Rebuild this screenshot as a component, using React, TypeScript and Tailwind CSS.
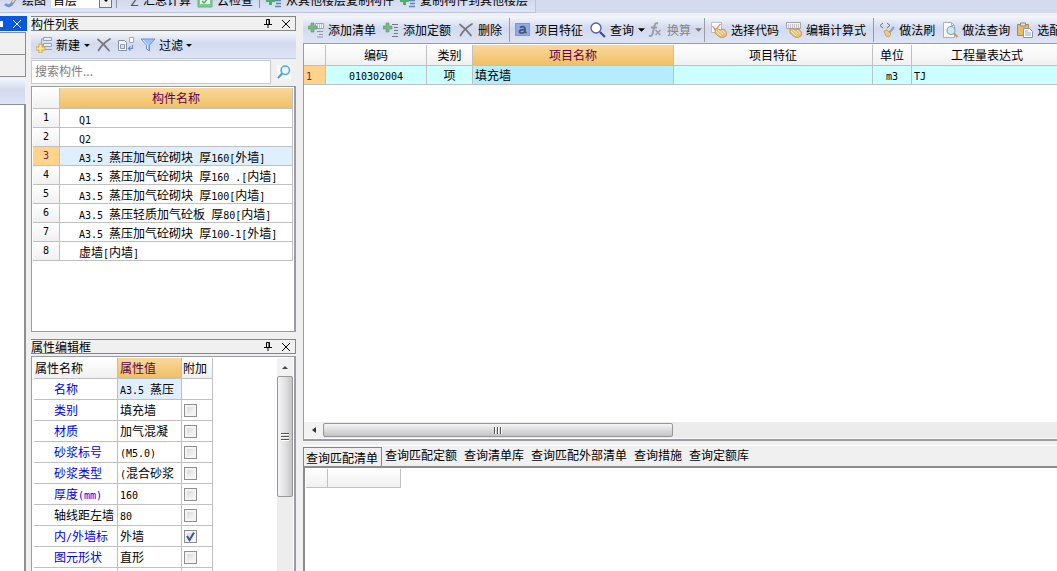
import type { ReactNode } from 'react';
import clsx from 'clsx';

const BAR = 'bg-linear-to-b from-[#f3f6fc] from-0% via-[#d3daee] via-45% to-[#dde4f6]';
const HEAD = 'bg-linear-to-b from-white to-[#f0f0f0]';
const HEAD_ACTIVE = 'bg-linear-to-b from-[#fad79b] to-[#f0c063] text-[#5a0050]';

const components = [
  'Q1',
  'Q2',
  'A3.5 蒸压加气砼砌块 厚160[外墙]',
  'A3.5 蒸压加气砼砌块 厚160 .[内墙]',
  'A3.5 蒸压加气砼砌块 厚100[内墙]',
  'A3.5 蒸压轻质加气砼板 厚80[内墙]',
  'A3.5 蒸压加气砼砌块 厚100-1[外墙]',
  '虚墙[内墙]',
];

type Property = { name: string; value: string; own?: boolean; check?: boolean };

const properties: Property[] = [
  { name: '名称', value: 'A3.5 蒸压' },
  { name: '类别', value: '填充墙', check: false },
  { name: '材质', value: '加气混凝', check: false },
  { name: '砂浆标号', value: '(M5.0)', check: false },
  { name: '砂浆类型', value: '(混合砂浆', check: false },
  { name: '厚度(mm)', value: '160', check: false },
  { name: '轴线距左墙', value: '80', own: true, check: false },
  { name: '内/外墙标', value: '外墙', check: true },
  { name: '图元形状', value: '直形', check: false },
  { name: '起点顶标高', value: '', own: true, check: false },
];

const tabs = ['查询匹配清单', '查询匹配定额', '查询清单库', '查询匹配外部清单', '查询措施', '查询定额库'];

// Latin runs are half the width of a Chinese character
function Mixed({ text }: { text: string }) {
  return (
    <>
      {text.split(/([\x20-\x7e]+)/).map((part, i) =>
        /^[\x20-\x7e]+$/.test(part) ? (
          <span key={i} className="font-['DejaVu_Sans_Mono',monospace] text-[10px] leading-none whitespace-pre">
            {part}
          </span>
        ) : (
          part
        ),
      )}
    </>
  );
}

function Svg({ children, className }: { children: ReactNode; className?: string }) {
  return (
    <svg viewBox="0 0 16 16" className={clsx('size-4 shrink-0', className)} fill="none" aria-hidden="true">
      {children}
    </svg>
  );
}

const GreenPlus = () => <path d="M3 1h3v3h3v3H6v3H3V7H0V4h3z" fill="#79b68b" stroke="#589a6b" strokeWidth=".6" />;

const AddListIcon = () => (
  <Svg>
    <path d="M7.500 1.500h8v5h-8z" fill="#f3f6fa" stroke="#9ba7b5" />
    <path d="M9 3h1m1 0h1m1 0h1M9 5h1m1 0h1m1 0h1" stroke="#8290a2" />
    <path d="M9 9.500h6M11 12.500h4M9 15h6" stroke="#8d98a6" />
    <GreenPlus />
  </Svg>
);

const AddQuotaIcon = () => (
  <Svg>
    <path d="M9 2.500h6M11 5.500h4M11 8.500h4M11 11.500h4M9 14.500h6" stroke="#74797f" />
    <GreenPlus />
  </Svg>
);

const DeleteIcon = () => (
  <Svg>
    <path d="M2 2.500c4 3 8 7 11 11M14 2C9 5 5 9 2.500 13.500" stroke="#777" strokeWidth="1.700" strokeLinecap="round" />
  </Svg>
);

const FeatureIcon = () => (
  <Svg>
    <path d="M0 1h15v13H0z" fill="#7598df" />
    <path d="M1 2h13v11H1z" fill="#8daceb" />
    <path d="M5 5.500c2-1.500 5-1 5 1v4.500M10 7.500c-3 0-5.500.5-5.500 2.200 0 2 4 1.800 5.500-.2M10 10l1.500 1" stroke="#49566f" strokeWidth="1.900" />
  </Svg>
);

const QueryIcon = () => (
  <Svg>
    <circle cx="6" cy="6" r="5" fill="#fff" stroke="#5858b0" strokeWidth="1.300" />
    <path d="m10 10 5 5" stroke="#4646a0" strokeWidth="2.200" />
  </Svg>
);

const FxIcon = () => (
  <Svg>
    <path d="M11 1.500C8.500.5 8 2 7.500 4L5.500 12c-.5 2-2 2.500-3.500 1.500M4 5.500h6" stroke="#999ca5" strokeWidth="1.900" />
    <path d="m8.500 8 5 5m0-5-5 5" stroke="#999ca5" strokeWidth="1.500" />
  </Svg>
);

const HandIcon = ({ chart }: { chart?: boolean }) => (
  <Svg>
    {chart ? (
      <>
        <path d="M.5.5h10v10H.500z" fill="#fff" stroke="#b9bec8" />
        <path d="m1.500 4 3 4 5-6" stroke="#dc8d85" strokeWidth="1.300" />
      </>
    ) : (
      <>
        <path d="M.5.5h14v6H.500z" fill="#f3f3f3" stroke="#a3a6ad" />
        <path d="M2 3h11M2 5h11" stroke="#8f939c" strokeDasharray="1 1" />
      </>
    )}
    <path d="M4 7c2-1 4 0 5 1l4-1 3 4-1 3-4 2c-3-1-5-3-7-5z" fill="#e5c27d" stroke="#b98f48" strokeWidth=".8" />
    <path d="m7 8 5 4m-7-3 5 5m1-6 3 3" stroke="#fbe8b8" />
  </Svg>
);

const BrushIcon = () => (
  <Svg>
    <path d="M4 1 1 3.500 4 6M8 1l3 2.500L8 6" stroke="#6f7480" />
    <path d="m15 5-5 6" stroke="#9a9eaa" strokeWidth="2" />
    <path d="m5 9 3-1 4 4-2 3-3-1z" fill="#f1cb79" stroke="#c79848" strokeWidth=".8" />
  </Svg>
);

const DocSearchIcon = () => (
  <Svg>
    <path d="M1.500.5h8l3 3v12h-11z" fill="#fdfeff" stroke="#a8b2c0" />
    <path d="M9.500.5v3h3" stroke="#a8b2c0" />
    <circle cx="9" cy="8.500" r="4" fill="#cde8f5" stroke="#82a9bf" strokeWidth="1.200" />
    <path d="m12 11.500 3.500 3.500" stroke="#d09850" strokeWidth="2" />
  </Svg>
);

const PasteIcon = () => (
  <Svg>
    <path d="M.5 2.500h11v11H.500z" fill="#eabb66" stroke="#b48643" />
    <path d="M3.500 1h5v3h-5z" fill="#dfe2e7" stroke="#858b94" />
    <path d="M6.500 6.500h6l3 3v6h-9z" fill="#fff" stroke="#8796ad" />
    <path d="M8 9h3m-3 2h6m-6 2h6" stroke="#8fa8cb" />
  </Svg>
);

const NewIcon = () => (
  <Svg>
    <path d="M7.500.5h8v3h-8zM7.500 6.500h8v3h-8zM5 2h2M5 8h2M5.500 2v8M9 12.500h7" fill="#e6edf5" stroke="#91a5ba" />
    <path d="M3 7h3v3h3v3H6v3H3v-3H0v-3h3z" fill="#fbe48a" stroke="#c89c36" strokeWidth=".8" />
  </Svg>
);

const CopyIcon = () => (
  <Svg>
    <path d="M.5 3.500h6l2 2v8h-8z" fill="#fff" stroke="#8390a8" />
    <path d="M2.500 7.500h4v4h-4z" fill="#d7dce5" stroke="#8f99aa" />
    <path d="M11.500.5h4v5h-4z" fill="#fff" stroke="#9daac0" />
    <path d="M14.500 8v3.500H11M12.500 9.500l-2 2 2 2" stroke="#668ed5" strokeWidth="1.200" />
  </Svg>
);

const FilterIcon = () => (
  <Svg>
    <path d="M1 2h14L9.500 8v6L6.500 12V8z" fill="#9fc1ef" stroke="#6793d6" />
    <path d="m3 3 4.500 5v4" stroke="#dceafc" />
  </Svg>
);

const GridPlusIcon = () => (
  <Svg>
    <path d="M3 4h3v3h3v3H6v3H3v-3H0V7h3z" fill="#4cae68" />
    <path d="M9 8.500h6M10 11.500h5M9 14.500h6" stroke="#5b86b5" strokeWidth="1.500" />
  </Svg>
);

const CloudIcon = () => (
  <Svg>
    <path d="M1 3h14v12H1z" fill="#7fca93" stroke="#62b47a" />
    <path d="M3 7h10v5H3z" fill="#e9f8ed" />
    <path d="m5 9 2 2 4-5" stroke="#4daa67" strokeWidth="1.500" />
  </Svg>
);

const DrawIcon = () => (
  <Svg>
    <path d="M1 12c3 3 6 2 8-2l5-7" stroke="#7097ce" strokeWidth="3" />
    <path d="m7 10 6-8 2 2-6 7z" fill="#eed69f" stroke="#a6a1a0" strokeWidth=".8" />
  </Svg>
);

const Caret = ({ muted }: { muted?: boolean }) => (
  <svg viewBox="0 0 8 4" className={clsx('h-1 w-[7px]', muted ? 'fill-[#777]' : 'fill-black')} aria-hidden="true">
    <path d="M0 0h8L4 4z" />
  </svg>
);

const SmallCaret = () => (
  <svg viewBox="0 0 6 3" className="h-[3px] w-1.5" aria-hidden="true">
    <path d="M0 0h6L3 3z" />
  </svg>
);

const Sep = () => <span className="h-6 w-px shrink-0 bg-[#9a9ca4]" />;

function Tool({ icon, label, drop, muted }: { icon: ReactNode; label: string; drop?: boolean; muted?: boolean }) {
  return (
    <button
      type="button"
      disabled={muted}
      className={clsx('flex shrink-0 items-center gap-1 whitespace-nowrap', drop ? 'pr-0.5' : 'pr-[7px]', muted && 'text-[#858585]')}
    >
      {icon}
      {label}
      {drop && <Caret muted={muted} />}
    </button>
  );
}

const CloseGlyph = () => (
  <svg viewBox="0 0 8 8" className="size-2" stroke="currentColor" aria-hidden="true">
    <path d="m0 0 8 8M8 0 0 8" />
  </svg>
);

const PinGlyph = () => (
  <svg viewBox="0 0 8 9" className="h-[9px] w-2" fill="none" stroke="currentColor" aria-hidden="true">
    <path d="M2.500 5V.5h3V5M5 .5V5M0 5.500h8M4 6v3" />
  </svg>
);

function PanelTitle({ title }: { title: string }) {
  return (
    <div className="flex h-[15px] shrink-0 items-center border border-l-0 border-[#858585] pr-[5px] leading-[13px]">
      <h2 className="flex-1">{title}</h2>
      <button type="button" aria-label="固定" className="mr-[10px]">
        <PinGlyph />
      </button>
      <button type="button" aria-label="关闭">
        <CloseGlyph />
      </button>
    </div>
  );
}

function TopBar() {
  return (
    <header className="flex h-[13px] shrink-0 bg-[#d5dbee]">
      <div className="flex h-[13px] w-[536px] shrink-0 items-end overflow-hidden border-r border-b border-[#bcc4da] bg-linear-to-b from-[#d2d9ed] to-[#dfe5f7] pb-1 pl-1 leading-4">
        <DrawIcon />
        <span className="ml-0.5 w-[29px]">绘图</span>
        <div className="flex w-[61px] items-end bg-white">
          <select aria-label="楼层" className="w-12 appearance-none pl-0.5">
            <option>首层</option>
          </select>
          <span className="flex h-4 w-[13px] items-end justify-center border border-[#777] bg-[#eee] pb-[5px]">
            <SmallCaret />
          </span>
        </div>
        <span className="ml-1 h-4 w-px bg-[#8e929e]" />
        <button type="button" className="ml-[9px] flex whitespace-nowrap">
          <span className="w-[17px] text-sm leading-4 text-[#555]">Σ</span>汇总计算
        </button>
        <button type="button" className="ml-1.5 flex gap-1 whitespace-nowrap">
          <CloudIcon />
          云检查
        </button>
        <span className="mx-1.5 h-4 w-px bg-[#8e929e]" />
        <button type="button" className="flex gap-1 whitespace-nowrap">
          <GridPlusIcon />
          从其他楼层复制构件
        </button>
        <button type="button" className="ml-1.5 flex gap-1 whitespace-nowrap">
          <GridPlusIcon />
          复制构件到其他楼层
        </button>
      </div>
    </header>
  );
}

function LeftDock() {
  return (
    <aside className="flex w-[27px] shrink-0 flex-col">
      <div className="flex h-[15px] shrink-0 items-center justify-end bg-[#0a58e0] pr-1.5 text-white">
        <span className="mr-2.5 h-1.5 w-1 bg-white" />
        <button type="button" aria-label="关闭">
          <CloseGlyph />
        </button>
      </div>
      <div className="mt-px mr-px h-[23px] shrink-0 border border-l-0 border-[#8c8c8c]" />
      <div className="mr-px h-[22px] shrink-0 border-r border-b border-[#8c8c8c]" />
      <div className={clsx('mt-px mr-0.5 h-[26px] shrink-0', BAR)} />
      <div className="mr-px flex-1 border-t border-r-2 border-[#8e9099] bg-white" />
    </aside>
  );
}

function ComponentList() {
  return (
    <section className="flex min-h-0 flex-1 flex-col">
      <PanelTitle title="构件列表" />
      <div className={clsx('mt-px flex h-[27px] shrink-0 items-center border-b border-[#c5cadb] pl-[5px]', BAR)}>
        <button type="button" className="flex items-center gap-1">
          <NewIcon />
          新建
          <SmallCaret />
        </button>
        <button type="button" aria-label="删除" className="ml-1.5">
          <DeleteIcon />
        </button>
        <button type="button" aria-label="复制" className="ml-1.5">
          <CopyIcon />
        </button>
        <button type="button" className="ml-1.5 flex items-center gap-[3px]">
          <FilterIcon />
          过滤
          <SmallCaret />
        </button>
      </div>
      <div className="mt-px flex h-6 shrink-0 items-center">
        <input
          type="text"
          aria-label="搜索构件"
          placeholder="搜索构件..."
          className="h-6 min-w-0 flex-1 border border-[#c7c9cf] bg-white px-[3px] pb-1 outline-none placeholder:text-[#7d7d7d]"
        />
        <button type="button" aria-label="搜索" className="mr-[5px] ml-1.5 bg-[#fafafa]">
          <Svg className="size-[14px]">
            <circle cx="9.500" cy="6" r="4.800" fill="#eaf6fe" stroke="#55a8df" strokeWidth="1.800" />
            <path d="M6 9.500 1 15" stroke="#4b9ede" strokeWidth="2.400" />
          </Svg>
        </button>
      </div>
      <div className="mt-0.5 min-h-0 flex-1 overflow-hidden border border-r-2 border-[#9a9ca4] bg-white pt-px pr-px pl-px">
        <table className="w-full table-fixed border-separate border-spacing-0 leading-4">
          <colgroup>
            <col className="w-[27px]" />
            <col />
          </colgroup>
          <thead>
            <tr className="h-[21px]">
              <th className={clsx('border-r border-b border-[#c0c0c0] p-0', HEAD)} />
              <th className={clsx('border-r border-b border-[#c0c0c0] p-0 font-normal', HEAD_ACTIVE)}>构件名称</th>
            </tr>
          </thead>
          <tbody>
            {components.map((name, i) => (
              <tr key={name} className="h-[19px]">
                <th
                  className={clsx(
                    "border-r border-b border-[#c0c0c0] p-0 font-['DejaVu_Sans_Mono',monospace] text-[10px] font-normal",
                    i === 2 ? 'bg-[#ffd48a] text-[#7a2050]' : HEAD,
                  )}
                >
                  {i + 1}
                </th>
                <td className={clsx('border-r border-b border-[#c0c0c0] p-0 pt-0.5 pl-[19px] whitespace-nowrap', i === 2 && 'bg-[#e0efff]')}>
                  <Mixed text={name} />
                </td>
              </tr>
            ))}
          </tbody>
        </table>
      </div>
    </section>
  );
}

function CheckBox({ label, on }: { label: string; on: boolean }) {
  return (
    <label className="relative ml-0.5 block size-[13px]">
      <input
        type="checkbox"
        aria-label={label}
        defaultChecked={on}
        className="peer block size-[13px] appearance-none border border-[#8e8f8f] bg-linear-to-br from-[#cfd3d8] to-white shadow-[inset_0_0_0_2px_#f4f4f4]"
      />
      <svg viewBox="0 0 13 13" className="absolute inset-0 hidden size-[13px] peer-checked:block" aria-hidden="true">
        <path d="m3 6 2.500 4L10 2.500" fill="none" stroke="#3d559c" strokeWidth="2" />
      </svg>
    </label>
  );
}

function PropertyEditor() {
  return (
    <section className="mt-[7px] flex h-[232px] shrink-0 flex-col">
      <PanelTitle title="属性编辑框" />
      <div className="mt-0.5 flex min-h-0 flex-1 overflow-hidden border border-r-2 border-b-0 border-[#9a9ca4] bg-white pt-px pr-px pl-0.5">
        <div className="min-w-0 flex-1">
          <table className="w-[179px] table-fixed border-separate border-spacing-0 leading-4 whitespace-nowrap">
            <colgroup>
              <col className="w-[84px]" />
              <col className="w-16" />
              <col className="w-[31px]" />
            </colgroup>
            <thead>
              <tr className="h-[21px] text-left">
                <th className={clsx('border-r border-b border-[#c0c0c0] p-0 pl-px font-normal', HEAD)}>属性名称</th>
                <th className={clsx('border-r border-b border-[#c0c0c0] p-0 pl-0.5 font-normal', HEAD_ACTIVE)}>属性值</th>
                <th className={clsx('border-r border-b border-[#c0c0c0] p-0 pl-px font-normal', HEAD)}>附加</th>
              </tr>
            </thead>
            <tbody>
              {properties.map((p, i) => (
                <tr key={p.name} className="h-[21px]">
                  <td className={clsx('border-r border-b border-[#c0c0c0] p-0 pl-5', !p.own && 'text-[#0000e6]')}>
                    <Mixed text={p.name} />
                  </td>
                  <td className={clsx('overflow-hidden border-r border-b border-[#c0c0c0] p-0 pl-0.5', i === 0 && 'bg-[#e0efff]')}>
                    <Mixed text={p.value} />
                  </td>
                  <td className="border-r border-b border-[#c0c0c0] p-0">
                    {p.check !== undefined && <CheckBox label={p.name} on={p.check} />}
                  </td>
                </tr>
              ))}
            </tbody>
          </table>
        </div>
        <div className="flex w-4 shrink-0 flex-col bg-[#ededed]">
          <button type="button" aria-label="向上滚动" className="flex h-[18px] items-center justify-center bg-[#f2f2f2]">
            <svg viewBox="0 0 6 3" className="h-[3px] w-1.5 fill-[#444]" aria-hidden="true">
              <path d="M3 0l3 3H0z" />
            </svg>
          </button>
          <div className="flex h-[121px] flex-col items-center justify-center gap-px rounded-xs border border-[#979797] bg-linear-to-r from-[#f5f5f5] via-[#e2e2e4] to-[#c4c4c8]">
            <span className="h-0.5 w-2 border-b border-white bg-[#555]" />
            <span className="h-0.5 w-2 border-b border-white bg-[#555]" />
            <span className="h-0.5 w-2 border-b border-white bg-[#555]" />
          </div>
        </div>
      </div>
    </section>
  );
}

const columns = [
  { label: '', value: '1' },
  { label: '编码', value: '010302004' },
  { label: '类别', value: '项' },
  { label: '项目名称', value: '填充墙' },
  { label: '项目特征', value: '' },
  { label: '单位', value: 'm3' },
  { label: '工程量表达式', value: 'TJ' },
];

function ItemPanel() {
  return (
    <section className="flex min-h-0 flex-1 flex-col">
      <div className={clsx('flex h-[27px] shrink-0 items-center overflow-hidden pl-[5px]', BAR)}>
        <Tool icon={<AddListIcon />} label="添加清单" />
        <Tool icon={<AddQuotaIcon />} label="添加定额" />
        <Tool icon={<DeleteIcon />} label="删除" />
        <Sep />
        <span className="w-[5px] shrink-0" />
        <Tool icon={<FeatureIcon />} label="项目特征" />
        <Tool icon={<QueryIcon />} label="查询" drop />
        <Tool icon={<FxIcon />} label="换算" drop muted />
        <Sep />
        <span className="w-1.5 shrink-0" />
        <Tool icon={<HandIcon chart />} label="选择代码" />
        <Tool icon={<HandIcon />} label="编辑计算式" />
        <Sep />
        <span className="w-[5px] shrink-0" />
        <Tool icon={<BrushIcon />} label="做法刷" />
        <Tool icon={<DocSearchIcon />} label="做法查询" />
        <Tool icon={<PasteIcon />} label="选配" />
      </div>
      <div className="flex min-h-0 flex-1 flex-col overflow-hidden border-t border-b-2 border-l border-[#9a9ca4] bg-white pt-px">
        <div className="min-h-0 flex-1 overflow-hidden">
          <table className="w-full min-w-[759px] table-fixed border-separate border-spacing-0 leading-4">
            <colgroup>
              <col className="w-[22px]" />
              <col className="w-[101px]" />
              <col className="w-[46px]" />
              <col className="w-[201px]" />
              <col className="w-[199px]" />
              <col className="w-[39px]" />
              <col />
            </colgroup>
            <thead>
              <tr className="h-[21px]">
                {columns.map((c, i) => (
                  <th key={c.label} className={clsx('border-r border-b border-[#c0c0c0] p-0 font-normal', i === 3 ? HEAD_ACTIVE : HEAD)}>
                    {c.label}
                  </th>
                ))}
              </tr>
            </thead>
            <tbody>
              <tr className="h-[19px]">
                {columns.map((c, i) => (
                  <td
                    key={c.label}
                    className={clsx(
                      'border-r border-b border-[#c0c0c0] p-0',
                      i === 0 && 'bg-[#ffd48a] pl-0.5 text-[#7a2050]',
                      i === 3 && 'bg-[#b3edff] pl-0.5',
                      i === 6 && 'pl-0.5',
                      i !== 0 && i !== 3 && 'bg-[#ccffff]',
                      (i === 1 || i === 2 || i === 5) && 'text-center',
                    )}
                  >
                    <Mixed text={c.value} />
                  </td>
                ))}
              </tr>
            </tbody>
          </table>
        </div>
        <div className="mb-px flex h-4 shrink-0 bg-[#ececec]">
          <button type="button" aria-label="向左滚动" className="flex w-[19px] items-center justify-center bg-[#f2f2f2]">
            <svg viewBox="0 0 4 6" className="h-1.5 w-1 fill-[#333]" aria-hidden="true">
              <path d="M4 0v6L0 3z" />
            </svg>
          </button>
          <div className="my-px flex w-[350px] items-center justify-center gap-px rounded-xs border border-[#979797] bg-linear-to-b from-[#f5f5f5] via-[#dcdcdf] to-[#c4c4c8]">
            <span className="h-[7px] w-0.5 border-r border-white bg-[#555]" />
            <span className="h-[7px] w-0.5 border-r border-white bg-[#555]" />
            <span className="h-[7px] w-0.5 border-r border-white bg-[#555]" />
          </div>
        </div>
      </div>
    </section>
  );
}

function QueryPanel() {
  return (
    <section className="mt-1 flex h-[126px] shrink-0 flex-col border-t border-white">
      <div role="tablist" className="flex h-5 shrink-0 items-start whitespace-nowrap">
        {tabs.map((tab, i) => (
          <button
            key={tab}
            type="button"
            role="tab"
            aria-selected={i === 0}
            className={clsx(
              'leading-4',
              i === 0 ? 'mt-px mr-[3px] h-[19px] border border-b-0 border-[#858585] px-0.5 pt-px pr-[3px]' : 'mr-[7px] pt-px',
            )}
          >
            {tab}
          </button>
        ))}
      </div>
      <div className="flex-1 border-t-2 border-l-2 border-[#8c8c8c] bg-white pt-px pl-px">
        <table className="table-fixed border-separate border-spacing-0">
          <thead>
            <tr className="h-[19px]">
              <th className={clsx('w-[22px] border-r border-b border-[#c0c0c0] p-0', HEAD)} />
              <th className={clsx('w-[73px] border-r border-b border-[#c0c0c0] p-0', HEAD)} />
            </tr>
          </thead>
        </table>
      </div>
    </section>
  );
}

export default function App() {
  return (
    <div className="flex h-screen flex-col overflow-hidden bg-[#f0f0f0] font-['Noto_Sans_CJK_SC',sans-serif] text-xs text-black">
      <TopBar />
      <div className="flex min-h-0 flex-1 pt-[3px]">
        <LeftDock />
        <div className="ml-1 flex w-[265px] shrink-0 flex-col">
          <ComponentList />
          <PropertyEditor />
        </div>
        <main className="ml-[7px] flex min-w-0 flex-1 flex-col">
          <ItemPanel />
          <QueryPanel />
        </main>
      </div>
    </div>
  );
}
